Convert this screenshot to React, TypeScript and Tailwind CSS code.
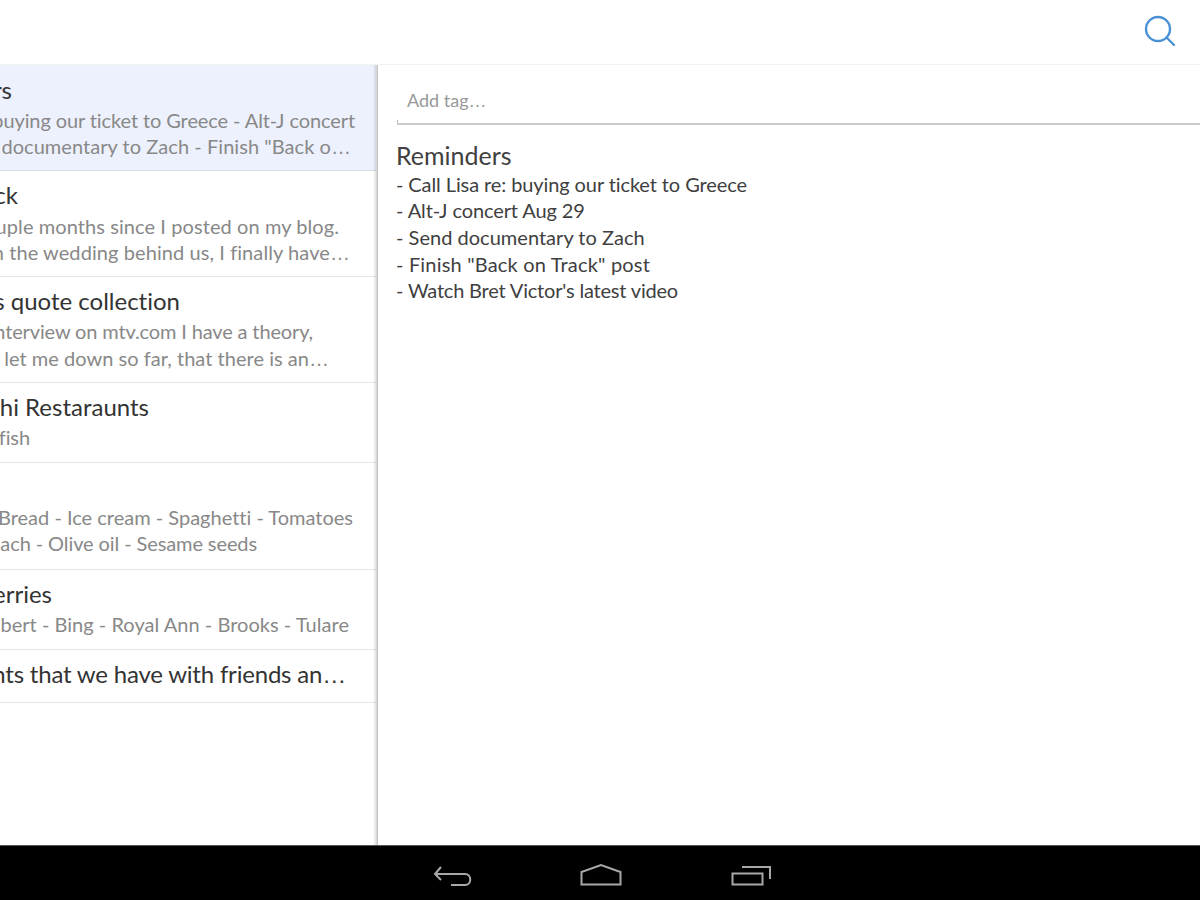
const font = "font-['Lato','Noto_Sans',sans-serif] [font-variant-ligatures:none]";

function Dots() {
  return <span className="font-['Liberation_Sans',sans-serif]">…</span>;
}
function T({ pr, tr = "", children }: { pr: string; tr?: string; children: React.ReactNode }) {
  return (
    <div className={`flex h-[30px] justify-end overflow-hidden whitespace-nowrap text-[24px] leading-[30px] text-[#333333] ${tr} ${pr}`}>
      <span className="shrink-0">{children}</span>
    </div>
  );
}
function B({ pr, tr, gap = "", children }: { pr: string; tr: string; gap?: string; children: React.ReactNode }) {
  return (
    <div className={`flex h-[26px] justify-end overflow-hidden whitespace-nowrap text-[20px] leading-[26px] text-[#888888] ${tr} ${gap} ${pr}`}>
      <span className="shrink-0">{children}</span>
    </div>
  );
}

export default function App() {
  return (
    <div className={`flex h-[900px] w-[1200px] flex-col overflow-hidden bg-white ${font}`}>
      <header className="flex h-[64px] shrink-0 items-start justify-end">
        <svg width="32" height="32" viewBox="0 0 32 32" className="mr-[24px] mt-[15px]" fill="none" stroke="#4a90d4" strokeWidth="2.4" strokeLinecap="round">
          <circle cx="14" cy="14" r="12" />
          <path d="M22.500 22.500L30 30" />
        </svg>
      </header>
      <div className="h-[1px] shrink-0 bg-[#f3f1f1]" />
      <main className="flex min-h-0 flex-1">
        <aside className="relative w-[376px] shrink-0">
          <div className="h-[106px] border-b border-[#dcdee4] bg-[#edf1fd] pt-[10px]">
            <T pr="pr-[364px]">Reminders</T>
            <B gap="mt-[2px]" tr="tracking-[-0.1px]" pr="pr-[21px]">- Call Lisa re: buying our ticket to Greece - Alt-J concert</B>
            <B tr="tracking-[0.05px]" pr="pr-[25px]">Aug 29 - Send documentary to Zach - Finish "Back o<Dots /></B>
          </div>
          <div className="h-[106px] border-b border-[#e6e6e6] pt-[9px]">
            <T pr="pr-[358px]">Back on Track</T>
            <B gap="mt-[3px]" tr="tracking-[0.08px]" pr="pr-[37px]">It's been a couple months since I posted on my blog.</B>
            <B tr="tracking-[0.08px]" pr="pr-[26px]">Now with the wedding behind us, I finally have<Dots /></B>
          </div>
          <div className="h-[106px] border-b border-[#e6e6e6] pt-[9px]">
            <T pr="pr-[196px]">Kanye's quote collection</T>
            <B gap="mt-[2px]" tr="tracking-[-0.14px]" pr="pr-[63px]">From an interview on mtv.com I have a theory,</B>
            <B gap="mt-[1px]" tr="tracking-[0.03px]" pr="pr-[47px]">that hasn't let me down so far, that there is an<Dots /></B>
          </div>
          <div className="h-[80px] border-b border-[#e6e6e6] pt-[9px]">
            <T pr="pr-[227px]">Best Sushi Restaraunts</T>
            <B gap="mt-[2px]" tr="tracking-[-0.1px]" pr="pr-[346px]">Raw fish</B>
          </div>
          <div className="h-[107px] border-b border-[#e6e6e6] pt-[9px]">
            <T pr="pr-[400px]">Groceries</T>
            <B gap="mt-[2px]" tr="tracking-[0px]" pr="pr-[23px]">Milk - Eggs - Bread - Ice cream - Spaghetti - Tomatoes</B>
            <B tr="tracking-[-0.1px]" pr="pr-[119px]">Spinach - Olive oil - Sesame seeds</B>
          </div>
          <div className="h-[80px] border-b border-[#e6e6e6] pt-[9px]">
            <T pr="pr-[324px]">Cherries</T>
            <B gap="mt-[2px]" tr="tracking-[0.03px]" pr="pr-[27px]">Lambert - Bing - Royal Ann - Brooks - Tulare</B>
          </div>
          <div className="h-[53px] border-b border-[#e6e6e6] pt-[9px]">
            <T tr="tracking-[-0.2px]" pr="pr-[30px]">Restaurants that we have with friends an<Dots /></T>
          </div>
          <div className="absolute inset-y-0 right-[-2px] w-[5px] bg-gradient-to-r from-black/0 via-black/10 to-black/25" />
        </aside>
        <section className="min-w-0 flex-1 pl-[21px]">
          <div className="relative h-[60px] border-b-2 border-[#cccccc] pl-[10px] pt-[22px] text-[18px] leading-[26px] text-[#999999]">
            Add tag<Dots />
            <div className="absolute bottom-0 left-0 h-[3px] w-[1px] bg-[#bbbbbb]" />
          </div>
          <h1 className="-ml-[1px] mt-[15px] text-[25px] leading-[30px] text-[#404040]">Reminders</h1>
          <div className="-ml-[1px] pt-[0.6px] text-[20px] leading-[26.5px] text-[#404040]">
            <p className="tracking-[-0.1px]">- Call Lisa re: buying our ticket to Greece</p>
            <p className="tracking-[-0.1px]">- Alt-J concert Aug 29</p>
            <p className="tracking-[0.02px]">- Send documentary to Zach</p>
            <p className="mt-[0.5px] tracking-[0.18px]">- Finish "Back on Track" post</p>
            <p className="tracking-[-0.19px]">- Watch Bret Victor's latest video</p>
          </div>
        </section>
      </main>
      <footer className="relative flex h-[55px] shrink-0 items-start justify-center border-t border-[#555555] bg-black">
        <svg width="1200" height="54" viewBox="0 845 1200 54" fill="none" stroke="#a8a8a8" strokeWidth="2">
          <path d="M441 866L435 873L441 879M436 873H465C472 873 472 884 465 884H451" />
          <path d="M581.500 883.500V871L601 864L620.500 871V883.500Z" />
          <path d="M732.500 872.500H762.500V883.500H732.500Z" />
          <path d="M742 866H770V878" />
        </svg>
      </footer>
    </div>
  );
}
